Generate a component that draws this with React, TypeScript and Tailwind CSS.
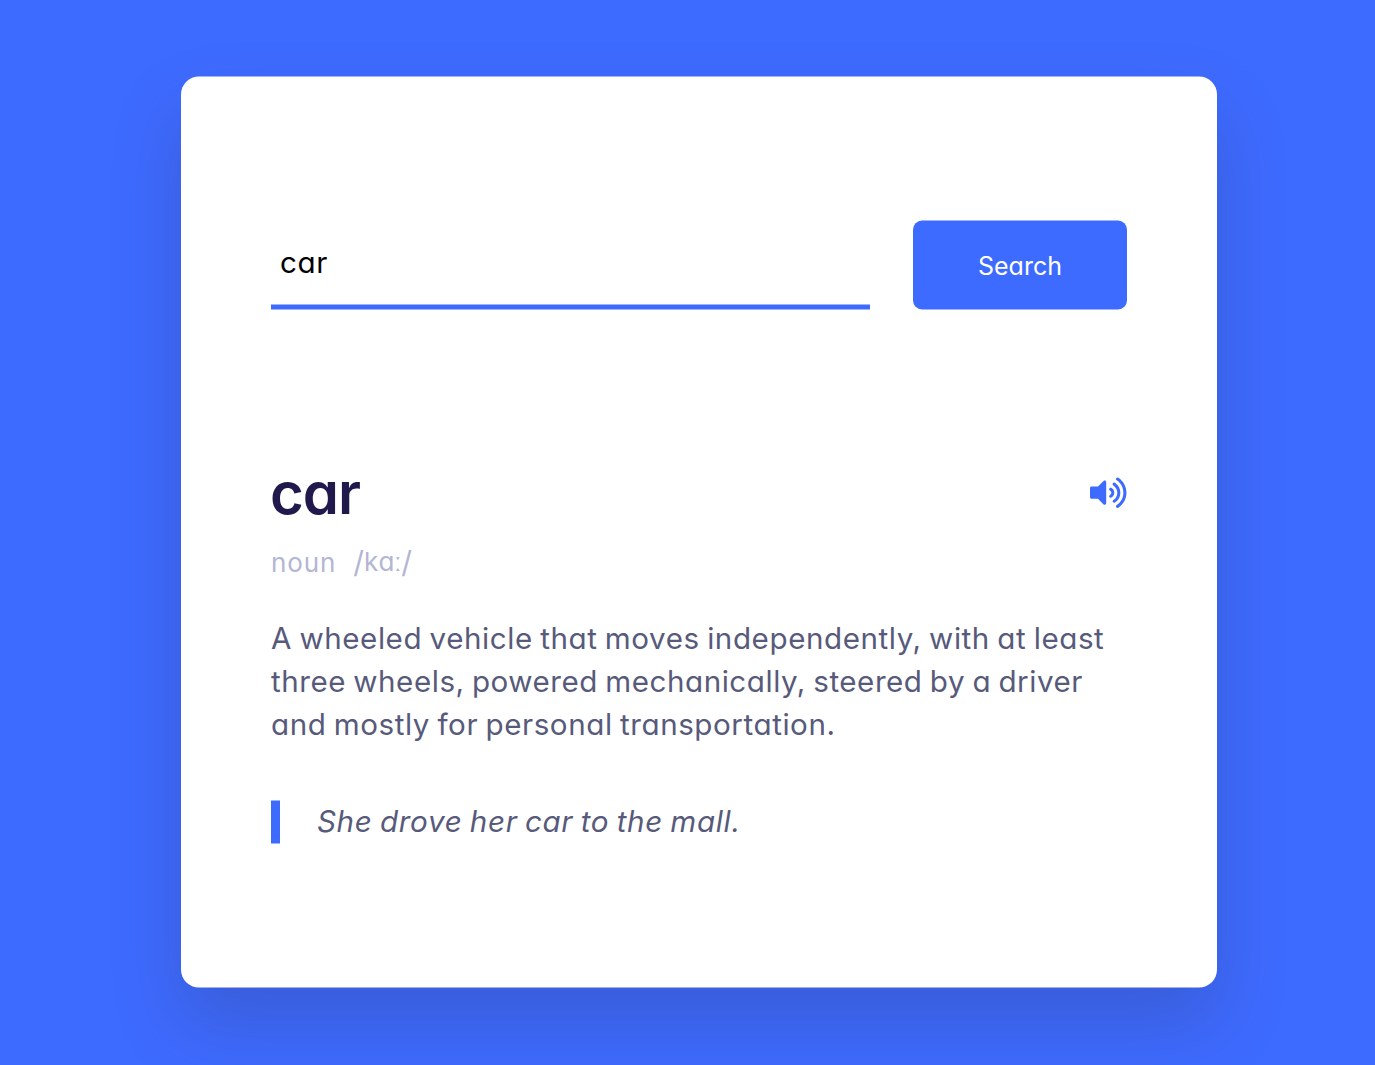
import { FaVolumeUp } from "react-icons/fa";

export default function App() {
  return (
    <div className="h-[1065px] w-[1375px] overflow-hidden bg-[#3e6bff] pt-[77px] pl-[181px] font-[Inter,sans-serif] [font-feature-settings:'cv11']">
      <main className="h-[911px] w-[1036px] -translate-y-[0.5px] rounded-[18px] bg-white px-[90px] pt-[144px] shadow-[0_36px_72px_rgba(38,33,61,0.2)]">
        <div className="flex justify-between">
          <input
            aria-label="Word"
            defaultValue="car"
            className="h-[89px] w-[599px] border-b-[5px] border-[#3e6bff] px-[9px] pb-[3px] text-[29.6px] tracking-[0.6px] text-black outline-none"
          />
          <button className="h-[89px] w-[214px] rounded-[9px] bg-[#3e6bff] pt-[3px] text-[25px] text-white">
            Search
          </button>
        </div>
        <section className="pt-[144px]">
          <div className="flex h-[79px] items-center justify-between">
            <h1 className="-ml-px text-[58px] font-semibold tracking-[-1px] text-[#1f194c]">car</h1>
            <FaVolumeUp className="mr-[0.4px] mb-px h-[32.4px] w-[36.45px] text-[#3e6bff]" />
          </div>
          <div className="flex h-[58px] items-center gap-[17px] text-[26px] text-[#b3b6d4]">
            <span className="tracking-[0.9px]">noun</span>
            <span className="flex items-center leading-[32px]">
              <span className="text-[30px]">/</span>
              <span>kɑː</span>
              <span className="text-[30px]">/</span>
            </span>
          </div>
          <p className="mt-[26px] text-[29.6px] leading-[43px] [word-spacing:-1.5px] whitespace-nowrap text-[#575a7b]">
            <span className="block tracking-[0.57px]">A wheeled vehicle that moves independently, with at least</span>
            <span className="block tracking-[0.53px]">three wheels, powered mechanically, steered by a driver</span>
            <span className="block tracking-[0.56px]">and mostly for personal transportation.</span>
          </p>
          <blockquote className="mt-[55px] h-[43px] border-l-[9px] border-[#3e6bff] pl-[37px] text-[29.6px] leading-[41px] tracking-[0.66px] [word-spacing:-1.5px] text-[#575a7b] italic">
            She drove her car to the mall.
          </blockquote>
        </section>
      </main>
    </div>
  );
}
